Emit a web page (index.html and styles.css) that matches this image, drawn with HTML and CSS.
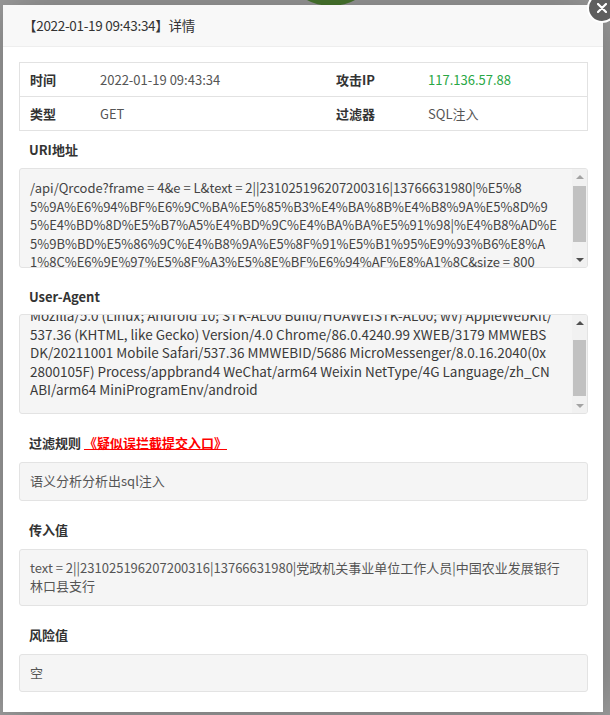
FILE: index.html
```html
<!DOCTYPE html>
<html lang="zh-CN">
<head>
<meta charset="utf-8">
<title>详情</title>
<link rel="stylesheet" href="styles.css">
</head>
<body>
<div class="blob"></div>
<div class="layer">
  <div class="layer-title">【2022-01-19 09:43:34】详情</div>
  <a class="layer-close" href="#" aria-label="关闭">
    <svg width="10" height="10" viewBox="0 0 10 10"><path d="M1 1L9 9M9 1L1 9" stroke="#fff" stroke-width="2.2" stroke-linecap="round"/></svg>
  </a>
  <div class="layer-content">
    <div class="info">
      <div class="cell label">时间</div>
      <div class="cell value">2022-01-19 09:43:34</div>
      <div class="cell label">攻击IP</div>
      <div class="cell value ip">117.136.57.88</div>
      <div class="cell label row2">类型</div>
      <div class="cell value row2">GET</div>
      <div class="cell label row2">过滤器</div>
      <div class="cell value row2">SQL注入</div>
    </div>

    <div class="field field-first">
      <div class="field-label tight">URI地址</div>
      <div class="box box-scroll">
        <div class="box-text">
          <div class="line">/api/Qrcode?frame = 4&amp;e = L&amp;text = 2||231025196207200316|13766631980|%E5%8</div>
          <div class="line">5%9A%E6%94%BF%E6%9C%BA%E5%85%B3%E4%BA%8B%E4%B8%9A%E5%8D%9</div>
          <div class="line">5%E4%BD%8D%E5%B7%A5%E4%BD%9C%E4%BA%BA%E5%91%98|%E4%B8%AD%E</div>
          <div class="line">5%9B%BD%E5%86%9C%E4%B8%9A%E5%8F%91%E5%B1%95%E9%93%B6%E8%A</div>
          <div class="line">1%8C%E6%9E%97%E5%8F%A3%E5%8E%BF%E6%94%AF%E8%A1%8C&amp;size = 800</div>
        </div>
        <div class="sbar">
          <div class="sbtn"><span class="arrow-up off"></span></div>
          <div class="strack"><div class="sthumb"></div></div>
          <div class="sbtn"><span class="arrow-down"></span></div>
        </div>
      </div>
    </div>

    <div class="field">
      <div class="field-label tighter">User-Agent</div>
      <div class="box box-scroll box-ua">
        <div class="box-text box-text-end">
          <div class="line">Mozilla/5.0 (Linux; Android 10; STK-AL00 Build/HUAWEISTK-AL00; wv) AppleWebKit/</div>
          <div class="line">537.36 (KHTML, like Gecko) Version/4.0 Chrome/86.0.4240.99 XWEB/3179 MMWEBS</div>
          <div class="line">DK/20211001 Mobile Safari/537.36 MMWEBID/5686 MicroMessenger/8.0.16.2040(0x</div>
          <div class="line">2800105F) Process/appbrand4 WeChat/arm64 Weixin NetType/4G Language/zh_CN</div>
          <div class="line">ABI/arm64 MiniProgramEnv/android</div>
        </div>
        <div class="sbar">
          <div class="sbtn"><span class="arrow-up"></span></div>
          <div class="strack strack-end"><div class="sthumb"></div></div>
          <div class="sbtn"><span class="arrow-down off"></span></div>
        </div>
      </div>
    </div>

    <div class="field">
      <div class="field-label">过滤规则 <a class="rule-link" href="#">《疑似误拦截提交入口》</a></div>
      <div class="box box-plain">语义分析分析出sql注入</div>
    </div>

    <div class="field">
      <div class="field-label">传入值</div>
      <div class="box box-plain"><div class="line">text = 2||231025196207200316|13766631980|党政机关事业单位工作人员|中国农业发展银行</div><div class="line">林口县支行</div></div>
    </div>

    <div class="field">
      <div class="field-label">风险值</div>
      <div class="box box-plain">空</div>
    </div>
  </div>
</div>
</body>
</html>
```
FILE: styles.css
```css
html, body {
  margin: 0;
  height: 715px;
  overflow: hidden;
}
body {
  position: relative;
  padding-top: 5px;
  box-sizing: border-box;
  background: #9e9e9e;
  font-family: "Noto Sans CJK SC", "Microsoft YaHei", sans-serif;
}
.blob {
  position: absolute;
  left: 296px;
  top: -38px;
  width: 70px;
  height: 44px;
  border-radius: 50%;
  background: #4b7b30;
}
.layer {
  position: relative;
  margin-left: 3px;
  width: 600px;
  background: #fff;
  box-shadow: 1px 1px 50px rgba(0, 0, 0, .3);
}
.layer-title {
  height: 41px;
  line-height: 41px;
  padding: 0 80px 0 20px;
  background: #f8f8f8;
  border-bottom: 1px solid #eee;
  font-size: 13.5px;
  letter-spacing: -0.3px;
  color: #333;
}
.layer-close {
  position: absolute;
  left: 584px;
  top: -12px;
  width: 26px;
  height: 26px;
  border-radius: 50%;
  background: #5e5e5e;
  border: 2px solid #fff;
  display: flex;
  align-items: center;
  justify-content: center;
}
.layer-content {
  padding: 15px 15px 20px 16px;
}
.info {
  display: grid;
  grid-template-columns: 70px 236px 92px 1fr;
  width: 569px;
  box-sizing: border-box;
  border: 1px solid #e2e2e2;
  font-size: 13px;
}
.cell {
  height: 33px;
  line-height: 33px;
  padding-left: 10px;
  white-space: nowrap;
}
.cell.row2 {
  border-top: 1px solid #e2e2e2;
}
.label {
  font-weight: bold;
  color: #333;
}
.value {
  color: #555;
}
.value.ip {
  color: #2aa745;
}
.field {
  margin-top: 19px;
}
.field-first {
  margin-top: 9px;
}
.field-label {
  height: 20px;
  line-height: 20px;
  padding-left: 10px;
  margin-bottom: 9px;
  font-size: 13px;
  font-weight: bold;
  color: #333;
}
.field-label.tight {
  margin-bottom: 8px;
}
.field-label.tighter {
  margin-bottom: 7px;
}
.rule-link {
  color: #f00;
  text-decoration: underline;
  font-weight: bold;
}
.box {
  border: 1px solid #e3e3e3;
  border-radius: 3px;
  background: #f5f5f5;
  font-size: 13px;
  line-height: 18.57px;
}
.box-plain {
  padding: 9px 10px;
  color: #555;
}
.box-scroll {
  display: flex;
  height: 100px;
  box-sizing: border-box;
  color: #444;
  overflow: hidden;
}
.box-ua {
  font-size: 13.5px;
  color: #3a3a3a;
}
.box-text {
  flex: 1;
  min-width: 0;
  overflow: hidden;
  padding: 10px 10px 0 10px;
}
.box-text-end {
  display: flex;
  flex-direction: column;
  justify-content: flex-end;
  padding: 0 10px 14px 10px;
}
.line {
  white-space: pre;
  flex: none;
}
.sbar {
  width: 15px;
  flex: none;
  display: flex;
  flex-direction: column;
  background: #f1f1f1;
}
.sbtn {
  height: 15px;
  flex: none;
  display: flex;
  align-items: center;
  justify-content: center;
}
.arrow-up, .arrow-down {
  width: 0;
  height: 0;
  border-left: 4px solid transparent;
  border-right: 4px solid transparent;
}
.arrow-up {
  border-bottom: 4px solid #505050;
}
.arrow-down {
  border-top: 4px solid #505050;
}
.arrow-up.off {
  border-bottom-color: #a3a3a3;
}
.arrow-down.off {
  border-top-color: #a3a3a3;
}
.strack {
  flex: 1;
  display: flex;
  flex-direction: column;
  padding: 2px 1px;
}
.strack-end {
  justify-content: flex-end;
}
.sthumb {
  height: 56px;
  flex: none;
  background: #c1c1c1;
}
```
